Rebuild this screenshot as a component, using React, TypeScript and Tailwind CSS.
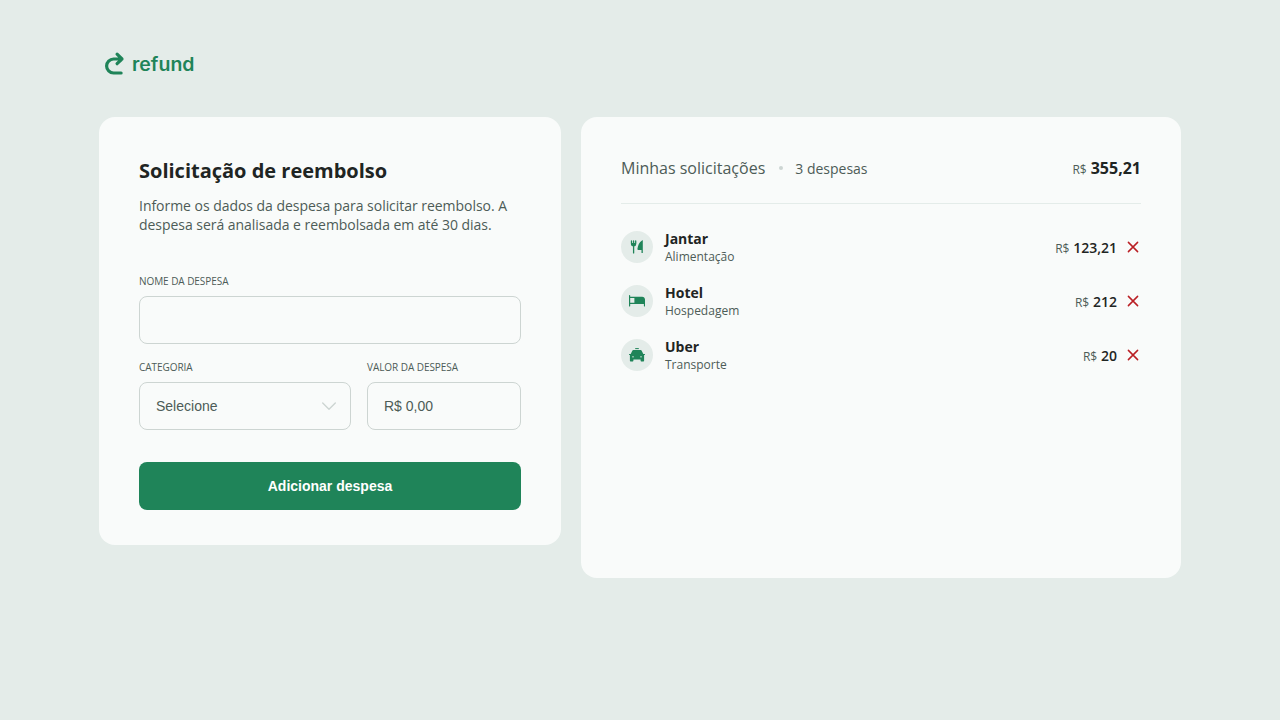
import type { ReactNode } from "react";

type Expense = { name: string; category: string; amount: string; icon: ReactNode };

function ForkKnifeIcon() {
  return (
    <svg width="16" height="16" viewBox="0 0 16 16" fill="none" stroke="currentColor" strokeLinecap="round">
      <path d="M2.5 1.8V4.6A2 2 0 0 0 6.7 4.6V1.8M4.6 1.8V13.9" strokeWidth="1.3" />
      <path d="M2.2 4H7V5.2A2.4 2.2 0 0 1 2.2 5.2Z" fill="currentColor" stroke="none" />
      <path
        d="M13.8 1.6V14.1H12.5V10.9H9.1C8.5 10.9 8.3 10.6 8.4 10.1C8.9 6.4 10.2 2.9 13 1.4C13.4 1.2 13.8 1.3 13.8 1.6Z"
        fill="currentColor"
        stroke="none"
      />
    </svg>
  );
}

function BedIcon() {
  return (
    <svg width="16" height="16" viewBox="0 0 16 16" fill="currentColor">
      <path d="M0 2.6C0 1.8 1.2 1.8 1.2 2.6V3.8H13.1C14.8 3.8 16 5 16 6.6V13C16 13.8 14.9 13.8 14.9 13V11H1.2V13C1.2 13.8 0 13.8 0 13ZM1.2 4.9V9.7H5.4V4.9Z" />
    </svg>
  );
}

function TaxiIcon() {
  return (
    <svg width="16" height="16" viewBox="0 0 16 16" fill="currentColor">
      <path d="M6.2 1.1H9.8V2.1H6.2Z" />
      <path
        fillRule="evenodd"
        d="M4.4 3H11.6C12.1 3 12.5 3.3 12.7 3.7L14.3 7.1H15.5C16.2 7.1 16.2 8.1 15.5 8.1H15.1V13.5C15.1 14.2 14.7 14.6 14.1 14.6H12.6C12 14.6 11.6 14.2 11.6 13.5V12.6H4.4V13.5C4.4 14.2 4 14.6 3.4 14.6H1.9C1.3 14.6 0.9 14.2 0.9 13.5V8.1H0.5C-0.2 8.1 -0.2 7.1 0.5 7.1H1.7L3.3 3.7C3.5 3.3 3.9 3 4.4 3ZM3 9.4V10.3H5V9.4ZM11 9.4V10.3H13V9.4Z"
      />
    </svg>
  );
}

const expenses: Expense[] = [
  { name: "Jantar", category: "Alimentação", amount: "123,21", icon: <ForkKnifeIcon /> },
  { name: "Hotel", category: "Hospedagem", amount: "212", icon: <BedIcon /> },
  { name: "Uber", category: "Transporte", amount: "20", icon: <TaxiIcon /> },
];

function Logo() {
  return (
    <svg width="92" height="32" viewBox="0 0 92 32" className="text-[#1f8459]" role="img" aria-label="refund">
      <path
        d="M18.1 25H10.6A7 7 0 0 1 10.6 11H19M14.1 6.2L19 11L14.1 15.7"
        fill="none"
        stroke="currentColor"
        strokeWidth="3.2"
        strokeLinecap="round"
        strokeLinejoin="round"
      />
      <text
        x="29"
        y="23.4"
        textLength="62.5"
        lengthAdjust="spacingAndGlyphs"
        fill="currentColor"
        className="font-['Inter',sans-serif] text-[18.5px] font-semibold"
      >
        refund
      </text>
    </svg>
  );
}

function Field({ label, children, className }: { label: string; children: ReactNode; className: string }) {
  return (
    <label className={`flex flex-col ${className}`}>
      <span className="mb-2 text-[10px] leading-[14px] tracking-[-0.06px] uppercase">{label}</span>
      {children}
    </label>
  );
}

function ExpenseRow({ expense }: { expense: Expense }) {
  return (
    <li className="flex h-[34px] items-center gap-3">
      <span className="flex size-8 shrink-0 items-center justify-center rounded-full bg-[#e4ece9] text-[#1f8459]">
        {expense.icon}
      </span>
      <div className="flex-1 pt-px">
        <strong className="block text-sm leading-[18px] font-bold text-[#1f2523]">{expense.name}</strong>
        <span className="block text-xs leading-[17px]">{expense.category}</span>
      </div>
      <span className="pt-0.5 text-sm font-semibold text-[#1f2523]">
        <small className="mr-1 text-xs font-normal tracking-[-0.2px] text-[#4d5c57]">R$</small>
        {expense.amount}
      </span>
      <button type="button" aria-label="Remover" className="-ml-1 text-[#ba1f24]">
        <svg width="16" height="16" viewBox="0 0 16 16" fill="none" stroke="currentColor">
          <path d="M3.4 3.4L12.6 12.6M12.6 3.4L3.4 12.6" strokeWidth="1.5" strokeLinecap="round" />
        </svg>
      </button>
    </li>
  );
}

export default function App() {
  return (
    <div className="min-h-screen bg-[#e4ece9] pt-12 font-['Open_Sans',sans-serif] text-[#4d5c57]">
      <div className="mx-auto w-[1082px]">
        <header className="mb-[37px] h-8 pl-1">
          <Logo />
        </header>
        <main className="flex items-start gap-5">
          <form className="h-[428px] w-[462px] rounded-2xl bg-[#f9fbfa] p-10">
            <h1 className="text-xl leading-[27px] font-bold text-[#1f2523]">Solicitação de reembolso</h1>
            <p className="mt-3 text-sm leading-[19px] tracking-[-0.035px]">
              Informe os dados da despesa para solicitar reembolso. A despesa será analisada e reembolsada em até 30
              dias.
            </p>
            <Field label="Nome da despesa" className="mt-10">
              <input className="h-12 w-full rounded-lg border border-[#cdd5d2] px-4 font-['Liberation_Sans',sans-serif] text-sm outline-none" />
            </Field>
            <div className="mt-4 flex gap-4">
              <Field label="Categoria" className="w-[212px]">
                <span className="flex h-12 items-center justify-between rounded-lg border border-[#cdd5d2] pr-[13px] pl-4 font-['Liberation_Sans',sans-serif] text-sm">
                  Selecione
                  <svg width="16" height="16" viewBox="0 0 16 16" fill="none" className="text-[#cdd5d2]">
                    <path
                      d="M1.7 5.1L8 11.2L14.3 5.1"
                      stroke="currentColor"
                      strokeWidth="1.4"
                      strokeLinecap="round"
                      strokeLinejoin="round"
                    />
                  </svg>
                </span>
              </Field>
              <Field label="Valor da despesa" className="w-[154px]">
                <input
                  placeholder="R$ 0,00"
                  className="h-12 w-full rounded-lg border border-[#cdd5d2] px-4 font-['Liberation_Sans',sans-serif] text-sm outline-none placeholder:text-[#4d5c57]"
                />
              </Field>
            </div>
            <button
              type="button"
              className="mt-8 h-12 w-full rounded-lg bg-[#1f8459] font-['Liberation_Sans',sans-serif] text-sm font-bold text-white"
            >
              Adicionar despesa
            </button>
          </form>
          <aside className="h-[461px] w-[600px] rounded-2xl bg-[#f9fbfa] p-10">
            <header className="flex h-[47px] justify-between border-b border-[#e4ece9]">
              <p className="flex h-[22px] items-center text-base">
                Minhas solicitações
                <span className="mr-3 ml-3.5 size-1 rounded-full bg-[#cdd5d2]" />
                <span className="pt-0.5 text-sm">3 despesas</span>
              </p>
              <h2 className="text-base leading-[22px] font-bold text-[#1f2523]">
                <small className="mr-1 text-xs font-normal text-[#4d5c57]">R$</small>
                355,21
              </h2>
            </header>
            <ul className="mt-[26px] flex flex-col gap-5">
              {expenses.map((expense) => (
                <ExpenseRow key={expense.name} expense={expense} />
              ))}
            </ul>
          </aside>
        </main>
      </div>
    </div>
  );
}
